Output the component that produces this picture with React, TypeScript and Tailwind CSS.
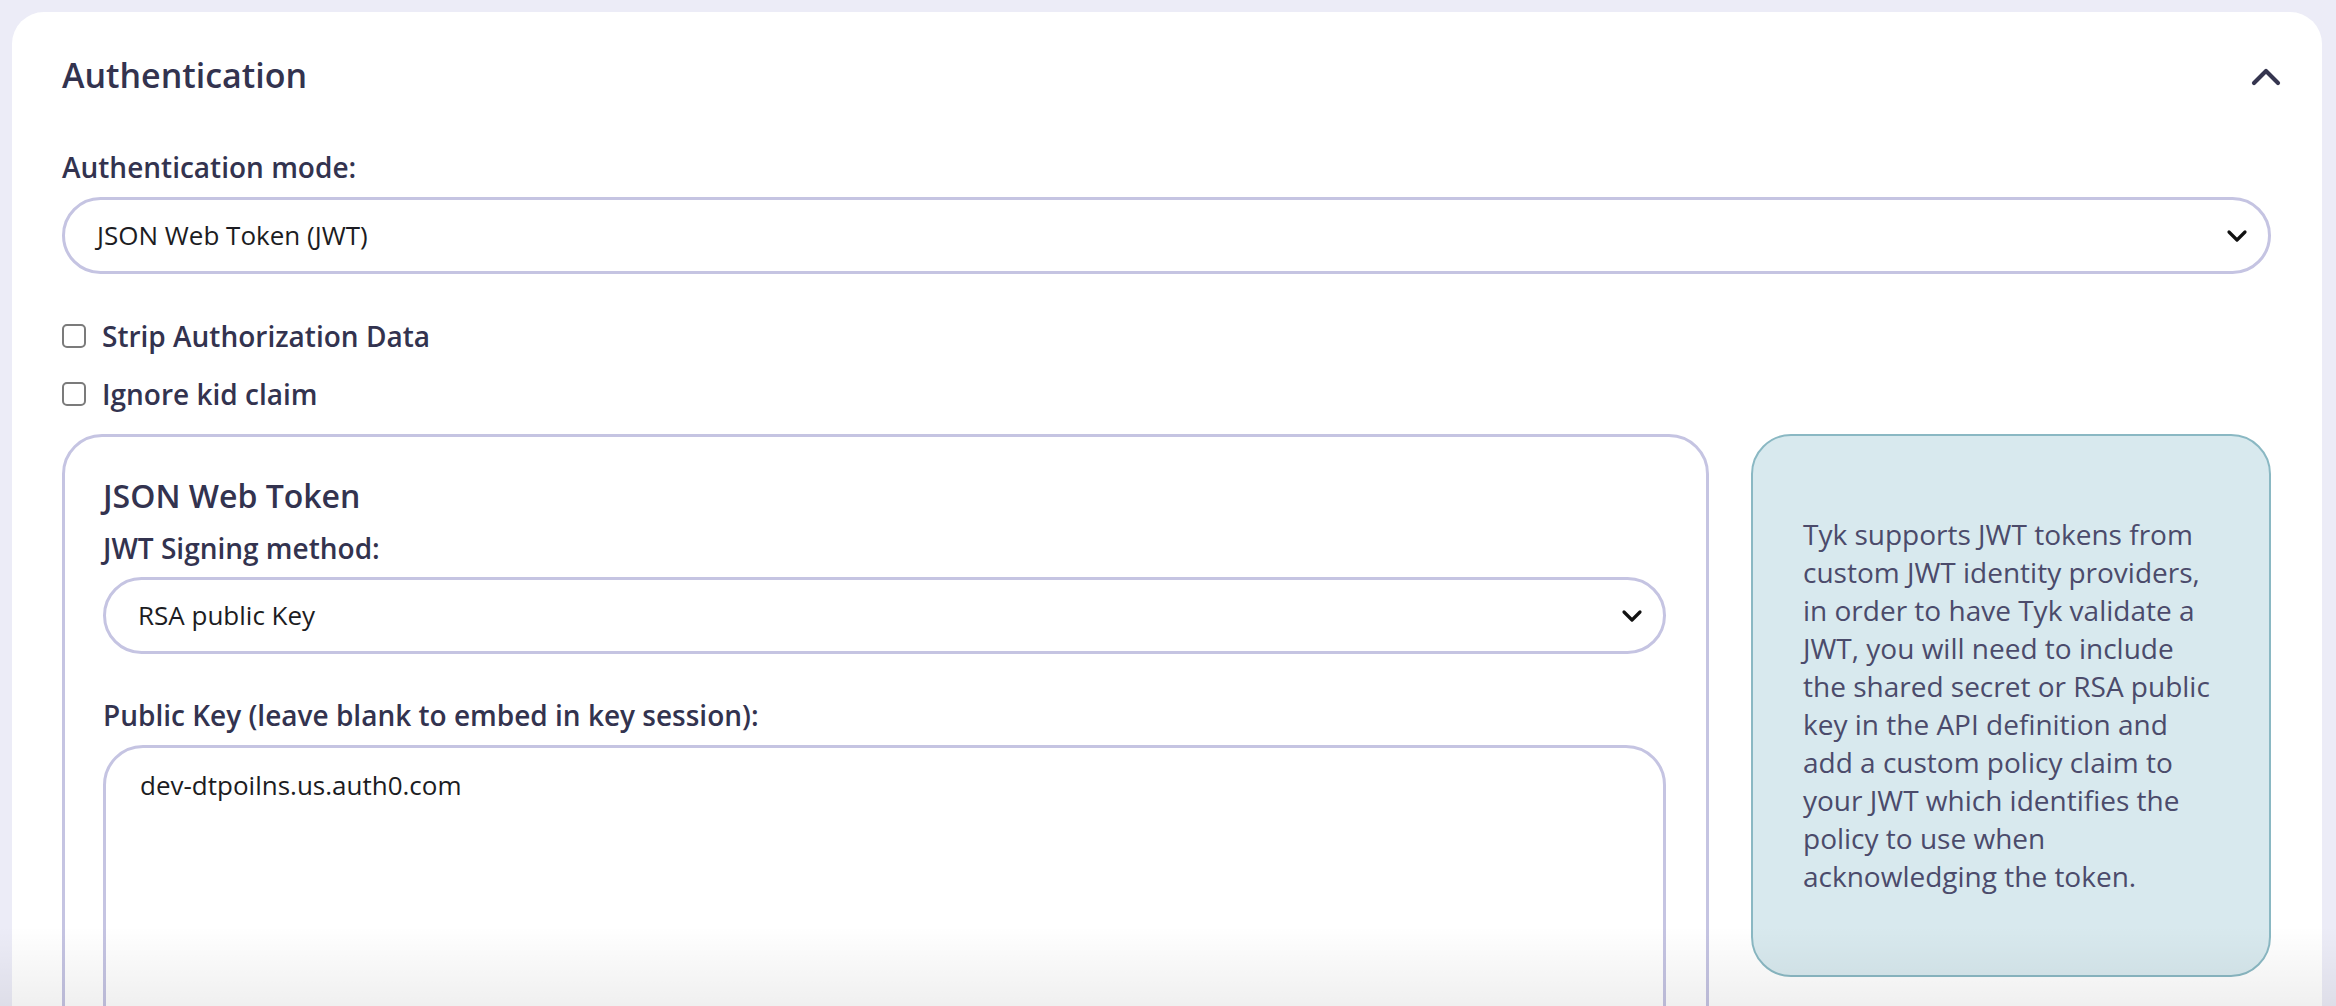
import React from "react";

const font = { fontFamily: '"Open Sans", "Noto Sans", sans-serif' };

function ChevronDown() {
  return (
    <svg width="22" height="14" viewBox="0 0 22 14" className="shrink-0">
      <polyline points="3,3 11,11 19,3" fill="none" stroke="#111" strokeWidth="3.2" strokeLinecap="round" strokeLinejoin="round" />
    </svg>
  );
}

function SelectBox({ value }: { value: string }) {
  return (
    <div className="flex items-center justify-between h-[77px] rounded-full border-[3px] border-[#c5c4e2] bg-white pl-[32px] pr-[20px]">
      <span className="text-[26px] text-[#1c1c22]">{value}</span>
      <ChevronDown />
    </div>
  );
}

function Check({ label }: { label: string }) {
  return (
    <label className="flex items-center gap-4 h-[34px]">
      <span className="w-[24px] h-[24px] rounded-[5px] border-2 border-[#7b7b7b] bg-white" />
      <span className="text-[28px] leading-[34px] font-semibold text-[#33334f]">{label}</span>
    </label>
  );
}

export default function App() {
  return (
    <div style={font} className="relative h-[1006px] overflow-hidden bg-[#ececf7] pt-3 pl-3 pr-[14px]">
      <div className="bg-white rounded-t-[32px] pl-[50px] pr-[51px] pt-[43px] h-[1100px]">
        <div className="flex items-center justify-between">
          <h2 className="text-[34px] leading-[40px] font-semibold text-[#33334f]">Authentication</h2>
          <svg width="30" height="18" viewBox="0 0 30 18" className="mr-[-10px] mt-1">
            <polyline points="3,15 15,3 27,15" fill="none" stroke="#35354f" strokeWidth="4.2" strokeLinecap="round" strokeLinejoin="round" />
          </svg>
        </div>

        <div className="mt-[55px] text-[28px] leading-[34px] font-semibold text-[#33334f]">Authentication mode:</div>
        <div className="mt-[13px]">
          <SelectBox value="JSON Web Token (JWT)" />
        </div>

        <div className="mt-[45px] flex flex-col gap-[24px]">
          <Check label="Strip Authorization Data" />
          <Check label="Ignore kid claim" />
        </div>

        <div className="mt-[23px] flex items-start gap-[42px]">
          <div className="flex-1 rounded-[40px] border-[3px] border-[#c5c4e2] pt-[39px] pl-[38px] pr-[40px] h-[700px]">
            <h3 className="text-[32px] leading-[40px] font-semibold text-[#33334f]">JSON Web Token</h3>
            <div className="mt-[15px] text-[28px] leading-[34px] font-semibold text-[#33334f]">JWT Signing method:</div>
            <div className="mt-[12px]">
              <SelectBox value="RSA public Key" />
            </div>
            <div className="mt-[44px] text-[28px] leading-[34px] font-semibold text-[#33334f]">
              Public Key (leave blank to embed in key session):
            </div>
            <div className="mt-[13px] h-[400px] rounded-[40px] border-[3px] border-[#c5c4e2] pl-[34px] pt-[22px]">
              <span className="text-[26px] leading-[30px] text-[#1c1c22]">dev-dtpoilns.us.auth0.com</span>
            </div>
          </div>

          <div className="w-[520px] shrink-0 rounded-[40px] border-2 border-[#8ab8c3] bg-[#d8e9ee] px-[50px] pt-[79px] pb-[80px]">
            <p className="text-[28px] leading-[38px] text-[#4b4b6b]">
              Tyk supports JWT tokens from custom JWT identity providers, in order to have Tyk validate a JWT, you will
              need to include the shared secret or RSA public key in the API definition and add a custom policy claim to
              your JWT which identifies the policy to use when acknowledging the token.
            </p>
          </div>
        </div>
      </div>

      <div className="pointer-events-none absolute bottom-0 left-0 right-0 h-[80px] bg-gradient-to-b from-transparent to-black/[0.06]" />
    </div>
  );
}
